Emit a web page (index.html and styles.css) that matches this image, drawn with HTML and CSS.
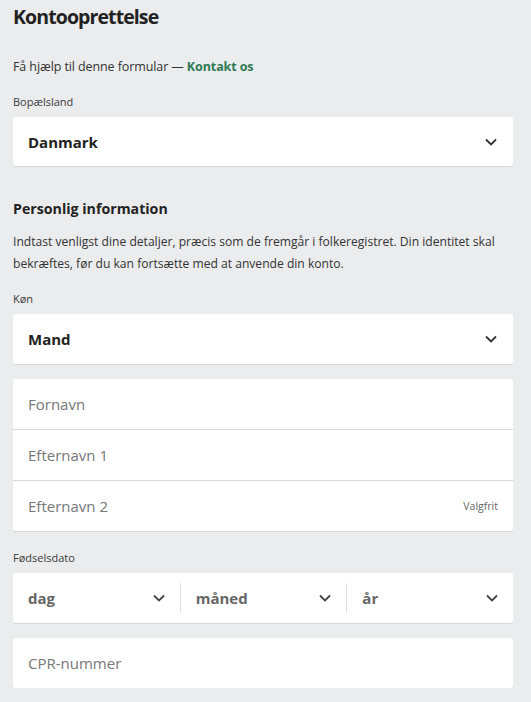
FILE: index.html
```html
<!DOCTYPE html>
<html lang="da">
<head>
<meta charset="utf-8">
<title>Kontooprettelse</title>
<link rel="stylesheet" href="styles.css">
</head>
<body>
<main class="page">
  <h1 class="title">Kontooprettelse</h1>
  <p class="help">Få hjælp til denne formular — <a href="#" class="link">Kontakt os</a></p>

  <label class="label">Bopælsland</label>
  <div class="box select">
    <span class="value">Danmark</span>
    <svg class="chev" viewBox="0 0 12 8"><path d="M1 1.5 L6 6.5 L11 1.5" /></svg>
  </div>

  <h2 class="section">Personlig information</h2>
  <p class="desc">Indtast venligst dine detaljer, præcis som de fremgår i folkeregistret. Din identitet skal bekræftes, før du kan fortsætte med at anvende din konto.</p>

  <label class="label">Køn</label>
  <div class="box select">
    <span class="value">Mand</span>
    <svg class="chev" viewBox="0 0 12 8"><path d="M1 1.5 L6 6.5 L11 1.5" /></svg>
  </div>

  <div class="box group">
    <div class="field"><span class="ph">Fornavn</span></div>
    <div class="field"><span class="ph">Efternavn 1</span></div>
    <div class="field"><span class="ph">Efternavn 2</span><span class="opt">Valgfrit</span></div>
  </div>

  <label class="label">Fødselsdato</label>
  <div class="box date">
    <div class="dcol"><span class="dval">dag</span><svg class="chev" viewBox="0 0 12 8"><path d="M1 1.5 L6 6.5 L11 1.5" /></svg></div>
    <div class="dcol"><span class="dval">måned</span><svg class="chev" viewBox="0 0 12 8"><path d="M1 1.5 L6 6.5 L11 1.5" /></svg></div>
    <div class="dcol"><span class="dval">år</span><svg class="chev" viewBox="0 0 12 8"><path d="M1 1.5 L6 6.5 L11 1.5" /></svg></div>
  </div>

  <div class="box single">
    <span class="ph">CPR-nummer</span>
  </div>
</main>
</body>
</html>
```

FILE: styles.css
```css
* { box-sizing: border-box; }
html, body {
  margin: 0;
  padding: 0;
  background: #ebeced;
}
body {
  font-family: "Open Sans", "Noto Sans", sans-serif;
  color: #2b2b2b;
}
.page {
  padding: 0 18px 0 13px;
  display: flex;
  flex-direction: column;
}
.title {
  margin: 3px 0 0;
  font-size: 19.5px;
  line-height: 28px;
  font-weight: 700;
  color: #222;
  letter-spacing: -0.9px;
}
.help {
  margin: 27px 0 0;
  font-size: 12.5px;
  line-height: 18px;
  color: #333;
  letter-spacing: -0.1px;
}
.link {
  color: #2d7a55;
  font-weight: 700;
  text-decoration: none;
}
.label {
  display: block;
  margin-top: 19px;
  font-size: 11px;
  line-height: 14px;
  color: #3a3a3a;
}
.box {
  background: #fff;
  border-radius: 2px;
  box-shadow: 0 1px 0 #d6d7d8;
}
.select {
  margin-top: 8px;
  height: 49px;
  display: flex;
  align-items: center;
  justify-content: space-between;
  padding: 0 16px 0 15px;
}
.value {
  font-size: 15px;
  font-weight: 700;
  color: #222;
}
.chev {
  width: 12px;
  height: 8px;
  fill: none;
  stroke: #333;
  stroke-width: 1.8;
}
.section {
  margin: 33px 0 0;
  font-size: 14.2px;
  line-height: 20px;
  font-weight: 700;
  color: #222;
}
.desc {
  margin: 12px 0 0;
  font-size: 12.1px;
  line-height: 22px;
  color: #333;
}
.desc + .label { margin-top: 17px; }
.desc + .label + .select { height: 50px; }
.group {
  margin-top: 15px;
  display: flex;
  flex-direction: column;
}
.field {
  height: 51px;
  display: flex;
  align-items: center;
  justify-content: space-between;
  padding: 0 15px;
  border-top: 1px solid #d9d9d9;
}
.field:first-child { border-top: none; height: 50px; }
.ph {
  font-size: 15px;
  color: #777;
}
.opt {
  font-size: 10.5px;
  color: #666;
}
.group + .label { margin-top: 20px; }
.date {
  margin-top: 8px;
  height: 50px;
  display: grid;
  grid-template-columns: 1fr 1fr 1fr;
  align-items: center;
}
.dcol {
  display: flex;
  align-items: center;
  justify-content: space-between;
  padding: 0 15px;
  height: 30px;
  border-left: 1px solid #e1e1e1;
}
.dcol:first-child { border-left: none; }
.dval {
  font-size: 15px;
  font-weight: 700;
  color: #666;
}
.dcol .chev { stroke: #444; }
.single {
  margin-top: 15px;
  height: 50px;
  display: flex;
  align-items: center;
  padding: 0 15px;
}
```
